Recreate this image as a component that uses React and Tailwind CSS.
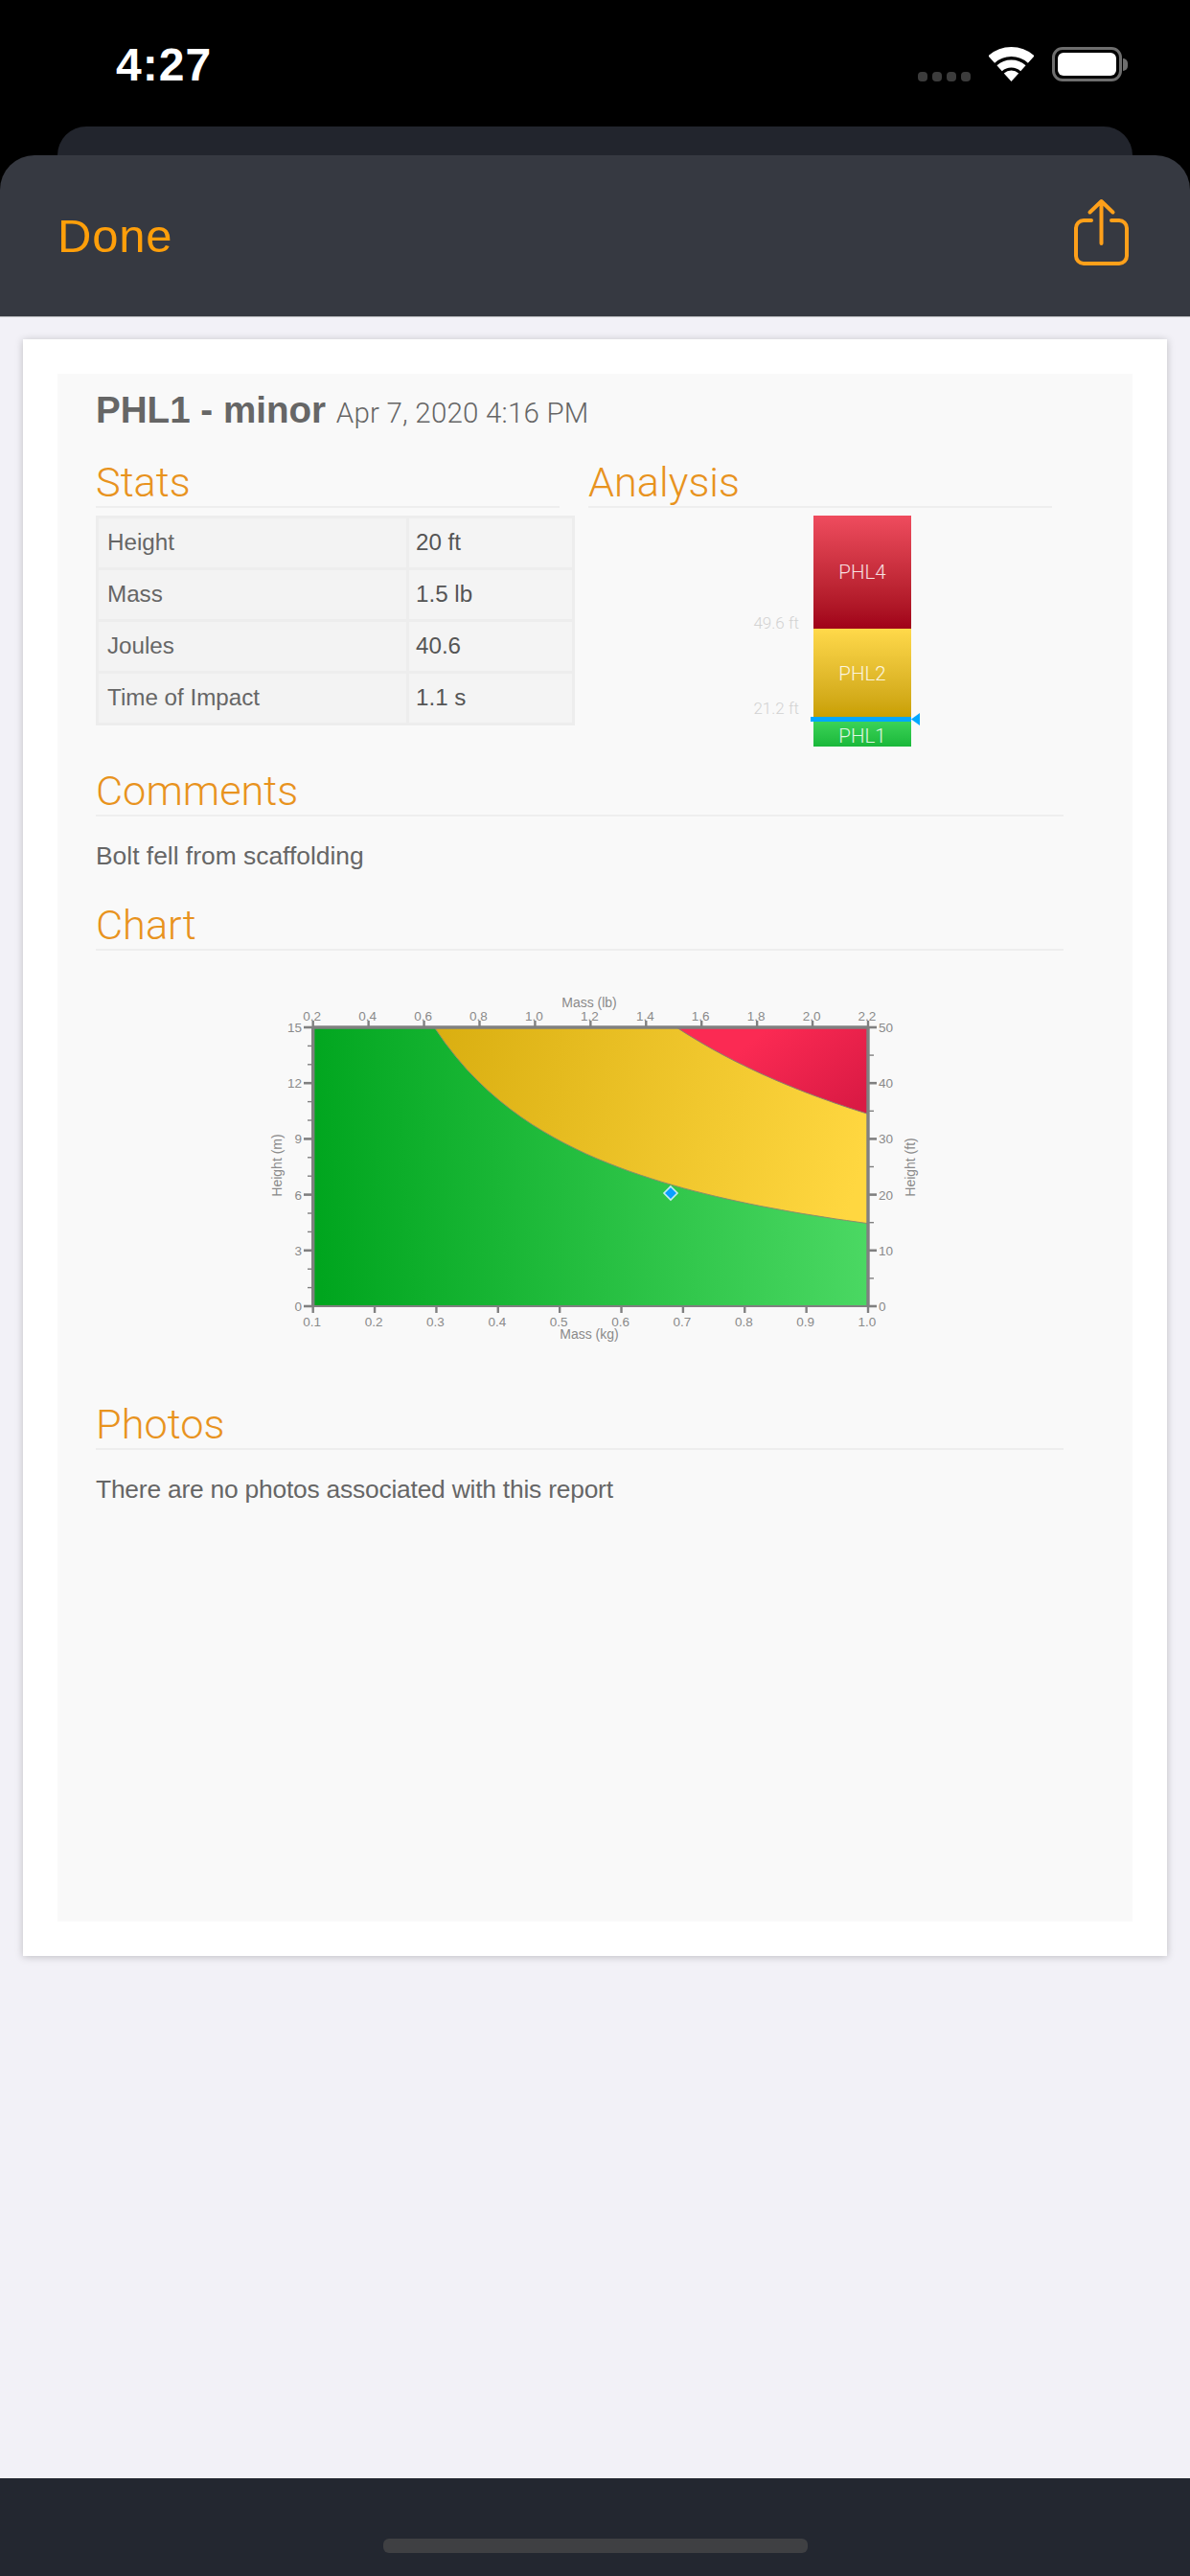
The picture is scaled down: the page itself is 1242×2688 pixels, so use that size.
const stats = [
  ['Height', '20 ft'],
  ['Mass', '1.5 lb'],
  ['Joules', '40.6'],
  ['Time of Impact', '1.1 s'],
]

// chart frame, in page pixels
const L = 326.7
const R = 906
const T = 1073
const B = 1364
const xKg = (m) => L + ((m - 0.1) / 0.9) * (R - L)
const yM = (h) => B - (h / 15) * (B - T)

function regionPath(mh) {
  const pts = []
  const start = mh / 15
  for (let i = 0; i <= 40; i++) {
    const m = start + ((1 - start) * i) / 40
    pts.push(`${xKg(m).toFixed(1)} ${yM(mh / m).toFixed(1)}`)
  }
  return `M${pts.join(' L')} L${R} ${T} Z`
}

function Section({ title, className = '' }) {
  return (
    <h2 className={`h-[52px] border-b-2 border-[#eeeeee] font-['Roboto',sans-serif] text-[43.3px] leading-[52px] font-light text-[#e8931e] ${className}`}>
      {title}
    </h2>
  )
}

function Chart() {
  const axisText = { fontSize: 13.5, fill: '#8a8a8a' }
  const lb = ['0.2', '0.4', '0.6', '0.8', '1.0', '1.2', '1.4', '1.6', '1.8', '2.0', '2.2']
  const kg = ['0.1', '0.2', '0.3', '0.4', '0.5', '0.6', '0.7', '0.8', '0.9', '1.0']
  const stepY = (B - T) / 15
  return (
    <svg viewBox="260 1030 720 380" className="mt-[37px] ml-[160px] block h-[380px] w-[720px] font-['Liberation_Sans',sans-serif]">
      <defs>
        <linearGradient id="zoneGreen" gradientUnits="userSpaceOnUse" x1="326" y1="1240" x2="906" y2="1190">
          <stop offset="0" stopColor="#00a51e" />
          <stop offset="1" stopColor="#4cd964" />
        </linearGradient>
        <linearGradient id="zoneYellow" gradientUnits="userSpaceOnUse" x1="450" y1="1075" x2="906" y2="1190">
          <stop offset="0" stopColor="#d9ae10" />
          <stop offset="1" stopColor="#ffd740" />
        </linearGradient>
        <linearGradient id="zoneRed" gradientUnits="userSpaceOnUse" x1="800" y1="1075" x2="875" y2="1170">
          <stop offset="0" stopColor="#fb2a53" />
          <stop offset="1" stopColor="#da1a44" />
        </linearGradient>
      </defs>

      <rect x={L} y={T} width={R - L} height={B - T} fill="url(#zoneGreen)" />
      <path d={regionPath(4.45)} fill="url(#zoneYellow)" stroke="#8c8c6c" strokeWidth="1" />
      <path d={regionPath(10.34)} fill="url(#zoneRed)" stroke="#8c7c6c" strokeWidth="1" />

      {/* frame */}
      <path d={`M${L} ${T} H${R} M${L} ${T} V${B} M${R} ${T} V${B}`} stroke="#808080" strokeWidth="3.4" fill="none" />
      <path d={`M${L} ${B} H${R}`} stroke="#808080" strokeWidth="2" fill="none" />

      {/* left and right ticks */}
      {Array.from({ length: 16 }, (_, i) => {
        const y = T + i * stepY
        const major = i % 3 === 0
        return (
          <line key={i} x1={major ? 317 : 321} x2={L} y1={y} y2={y} stroke="#808080" strokeWidth={major ? 2.6 : 1.4} />
        )
      })}
      {Array.from({ length: 11 }, (_, i) => {
        const y = T + (i * (B - T)) / 10
        const major = i % 2 === 0
        return (
          <line key={i} x1={R} x2={major ? 915 : 912} y1={y} y2={y} stroke="#808080" strokeWidth={major ? 2.6 : 1.4} />
        )
      })}
      {['15', '12', '9', '6', '3', '0'].map((v, i) => (
        <text key={v} x="315" y={T + i * 3 * stepY + 5} textAnchor="end" {...axisText}>{v}</text>
      ))}
      {['50', '40', '30', '20', '10', '0'].map((v, i) => (
        <text key={v} x="917" y={T + (i * (B - T)) / 5 + 5} {...axisText}>{v}</text>
      ))}

      {/* top and bottom ticks */}
      {lb.map((v, i) => {
        const x = L + (i * (R - L)) / 10
        return (
          <g key={v}>
            <line x1={x} x2={x} y1="1066" y2={T} stroke="#808080" strokeWidth="2.4" />
            <text x={x - 1} y="1066" textAnchor="middle" {...axisText}>{v}</text>
          </g>
        )
      })}
      {kg.map((v, i) => {
        const x = L + (i * (R - L)) / 9
        return (
          <g key={v}>
            <line x1={x} x2={x} y1={B} y2="1371" stroke="#808080" strokeWidth="2.4" />
            <text x={x - 1} y="1385" textAnchor="middle" {...axisText}>{v}</text>
          </g>
        )
      })}

      <text x="615" y="1052" textAnchor="middle" fontSize="14" fill="#8a8a8a">Mass (lb)</text>
      <text x="615" y="1398" textAnchor="middle" fontSize="14" fill="#8a8a8a">Mass (kg)</text>
      <text transform="translate(294 1217) rotate(-90)" textAnchor="middle" fontSize="14" fill="#8a8a8a">Height (m)</text>
      <text transform="translate(955 1219) rotate(-90)" textAnchor="middle" fontSize="14" fill="#8a8a8a">Height (ft)</text>

      {/* this report */}
      <path d="M700 1239 L707 1246 L700 1253 L693 1246 Z" fill="#0a9fff" stroke="#c4ecf0" strokeWidth="1.6" />
    </svg>
  )
}

export default function App() {
  return (
    <div className="flex h-[2688px] w-[1242px] flex-col overflow-hidden bg-black font-['Liberation_Sans',sans-serif]">
      {/* Status bar */}
      <div className="flex h-[132px] shrink-0 justify-between pt-[44px] pr-[65px] pl-[121px]">
        <span className="text-[48px] leading-[48px] font-bold tracking-[1px] text-white">4:27</span>
        <div className="mt-[5px] flex h-[36px] items-end gap-[19px]">
          <div className="flex gap-[5px]">
            {[0, 1, 2, 3].map((i) => (
              <span key={i} className="h-[10px] w-[10px] rounded-[4px] bg-[#3c3c3c]" />
            ))}
          </div>
          <svg width="47" height="36" viewBox="0 0 47 36" fill="none">
            <path d="M2.76 12.96 A31 31 0 0 1 44.24 12.96" stroke="white" strokeWidth="10" />
            <path d="M11.12 22.25 A18.5 18.5 0 0 1 35.88 22.25" stroke="white" strokeWidth="8" />
            <path d="M23.5 36 L15.8 27.5 A11.5 11.5 0 0 1 31.2 27.5 Z" fill="white" />
          </svg>
          <div className="flex h-[36px] items-center gap-[1px]">
            <div className="h-[36px] w-[73px] rounded-[11px] border-[3px] border-[#6e6e6e] p-[3px]">
              <div className="h-full w-full rounded-[6px] bg-white" />
            </div>
            <span className="h-[13px] w-[5px] rounded-r-[5px] bg-[#6e6e6e]" />
          </div>
        </div>
      </div>

      {/* Sheet behind */}
      <div className="mx-[60px] h-[30px] shrink-0 rounded-t-[30px] bg-[#22252d]" />

      {/* Sheet header */}
      <div className="flex h-[169px] shrink-0 items-center justify-between rounded-t-[36px] border-b border-[#b8b9bc] bg-[#363941] pr-[60px] pl-[60px]">
        <span className="text-[49px] leading-[60px] tracking-[0.8px] text-[#ff9f0a]">Done</span>
        <svg width="64" height="76" viewBox="0 0 64 76" fill="none" stroke="#ffa01a" strokeWidth="4" strokeLinecap="round" strokeLinejoin="round" className="mt-[-8px]">
          <path d="M21 26 H13 a8 8 0 0 0 -8 8 V63 a8 8 0 0 0 8 8 H50 a8 8 0 0 0 8 -8 V34 a8 8 0 0 0 -8 -8 H42" />
          <path d="M31.5 50 V6 M19.5 17.5 L31.5 6 L43.5 17.5" />
        </svg>
      </div>

      {/* Report */}
      <div className="flex-1 bg-[#f2f1f7] px-[24px] pt-[23px]">
        <div className="bg-white px-[36px] py-[36px] shadow-[0_1px_8px_rgba(0,0,0,0.22)]">
          <div className="h-[1615px] bg-[#f9f9f9] px-[40px] pt-[14px] text-[#666666]">
            <p className="h-[49px] text-[38.6px] leading-[48px] font-bold whitespace-nowrap">
              PHL1 - minor{' '}
              <span className="font-['Roboto',sans-serif] text-[29.5px] font-light tracking-[0.2px]">Apr 7, 2020 4:16 PM</span>
            </p>

            <div className="mt-[25px] grid grid-cols-[484px_484px] gap-x-[30px]">
              <div>
                <Section title="Stats" />
                <table className="mt-[8px] w-[500px] table-fixed border-collapse text-[24.2px]">
                  <tbody>
                    {stats.map(([label, value]) => (
                      <tr key={label} className="h-[54px]">
                        <td className="w-[324px] border-[3px] border-[#ededed] bg-[#f3f3f3] pl-[9px]">{label}</td>
                        <td className="border-[3px] border-[#ededed] bg-[#f4f4f4] pl-[7px] text-[#555555]">{value}</td>
                      </tr>
                    ))}
                  </tbody>
                </table>
              </div>

              <div>
                <Section title="Analysis" />
                <div className="relative mt-[8px] ml-[235px] w-[102px] font-['Roboto',sans-serif] text-[20.5px] font-light text-white/85">
                  <div className="flex h-[118px] items-center justify-center bg-gradient-to-b from-[#ef4c5e] to-[#a00018]">PHL4</div>
                  <div className="flex h-[92px] items-center justify-center bg-gradient-to-b from-[#ffd94a] to-[#c9a000] pt-[2px]">PHL2</div>
                  <div className="flex h-[31px] items-center justify-center bg-gradient-to-b from-[#3fd85c] to-[#19b83a] pt-[10px]">PHL1</div>

                  <span className="absolute top-[100px] right-[117px] text-[17px] whitespace-nowrap text-[#d2d2d2]">49.6 ft</span>
                  <span className="absolute top-[189px] right-[117px] text-[17px] whitespace-nowrap text-[#d2d2d2]">21.2 ft</span>

                  {/* height marker */}
                  <div className="absolute top-[210px] left-[-3px] h-[5px] w-[105px] bg-[#00a8ff]" />
                  <svg width="9" height="13" viewBox="0 0 9 13" className="absolute top-[206px] left-[102px]">
                    <path d="M0 6.5 L9 0 V13 Z" fill="#00a8ff" />
                  </svg>
                </div>
              </div>
            </div>

            <Section title="Comments" className="mt-[21px] w-[1010px]" />
            <p className="mt-[23px] text-[26.4px] leading-[36px]">Bolt fell from scaffolding</p>

            <Section title="Chart" className="mt-[29px] w-[1010px]" />
            <Chart />

            <Section title="Photos" className="mt-[52px] w-[1010px]" />
            <p className="mt-[23px] text-[26.4px] leading-[36px] tracking-[-0.22px]">There are no photos associated with this report</p>
          </div>
        </div>
      </div>

      {/* Home bar */}
      <div className="h-[102px] shrink-0 bg-[#232730] pt-[63px]">
        <div className="mx-auto h-[15px] w-[443px] rounded-[6px] bg-[#3f4043]" />
      </div>
    </div>
  )
}
